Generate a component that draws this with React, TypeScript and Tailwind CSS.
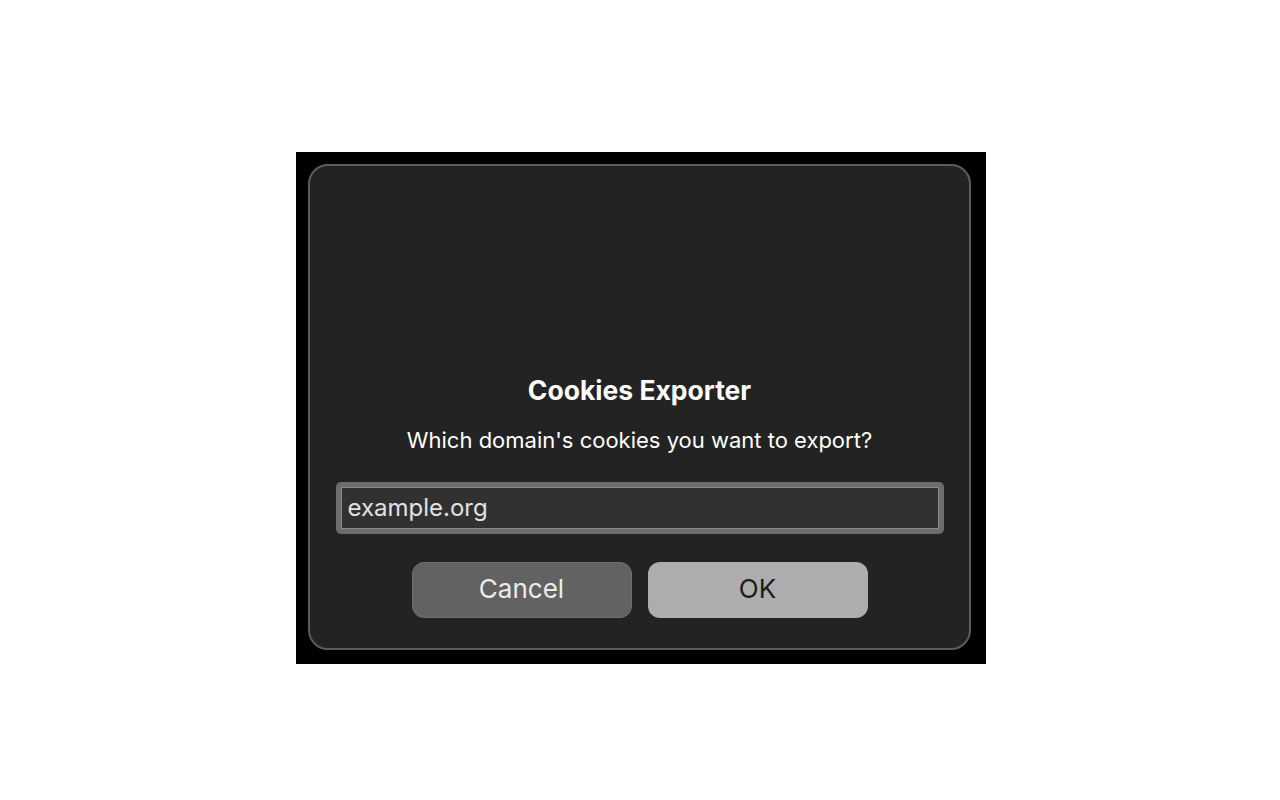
import React from "react";

export default function App() {
  return (
    <div className="w-[1280px] h-[800px] bg-white pt-[152px] pl-[296px]" style={{ fontFamily: "Inter, 'Noto Sans', sans-serif" }}>
      <div className="w-[690px] h-[512px] bg-black pt-[12px] pl-[12px]">
        <div className="w-[663px] h-[486px] rounded-[20px] border-2 border-[#5c5c5c] bg-[#232323] flex flex-col items-center pt-[208px] px-[25px]">
          <div className="text-[26.5px] leading-[32px] font-bold text-white">Cookies Exporter</div>
          <div className="mt-[20px] text-[22px] leading-[28px] text-white">Which domain's cookies you want to export?</div>
          <div className="mt-[28px] w-[608px] h-[52px] rounded-[5px] bg-[#6c6c6c] p-[5px]">
            <div className="w-full h-full border border-[#8c8c8c] bg-[#313131] flex items-center pl-[6px]">
              <span className="text-[24px] leading-[30px] text-[#e2e2e2]">example.org</span>
            </div>
          </div>
          <div className="mt-[28px] flex gap-[16px]">
            <div className="w-[220px] h-[56px] rounded-[12px] bg-[#626262] border border-[#6e6e6e] flex items-center justify-center pb-[3px] text-[26px] text-[#ececec]">Cancel</div>
            <div className="w-[220px] h-[56px] rounded-[12px] bg-[#adadad] flex items-center justify-center pb-[3px] text-[26px] text-[#1c1c1c]">OK</div>
          </div>
        </div>
      </div>
    </div>
  );
}
